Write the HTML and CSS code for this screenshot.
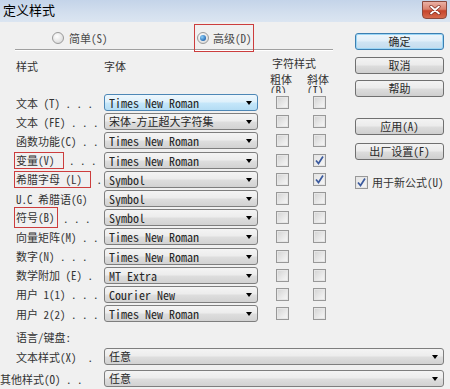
FILE: index.html
```html
<!DOCTYPE html>
<html lang="zh-CN">
<head>
<meta charset="utf-8">
<title>定义样式</title>
<link rel="stylesheet" href="styles.css">
</head>
<body>
<div class="win">
  <div class="titlebar">
    <span class="title">定义样式</span>
    <span class="close"><svg width="12" height="10" viewBox="0 0 12 10"><path d="M2 1.5 L10 8.5 M10 1.5 L2 8.5" stroke="#7a2a1e" stroke-width="3.2" stroke-linecap="round"/><path d="M2 1.5 L10 8.5 M10 1.5 L2 8.5" stroke="#ffffff" stroke-width="1.8" stroke-linecap="round"/></svg></span>
  </div>
  <div class="top">
    <div class="main">
      <div class="mode">
        <span class="opt opt-simple"><span class="radio"></span><span>简单(S)</span></span>
        <span class="opt opt-adv"><span class="radio on"></span><span>高级(D)</span></span>
      </div>
      <div class="sep"></div>
      <div class="head">
        <span class="h-style">样式</span>
        <span class="h-font">字体</span>
        <div class="h-char">
          <span class="h-char-title">字符样式</span>
          <div class="h-sub"><span class="sub sub-b">粗体(B)</span><span class="sub">斜体(I)</span></div>
        </div>
      </div>
      <div class="rows">
        <div class="row"><span class="lbl">文本 (T) . . .</span><div class="combo active"><span class="val">Times New Roman</span><i class="arr"></i></div><span class="cb"></span><span class="cb cb2"></span></div>
        <div class="row"><span class="lbl">文本 (FE) . . .</span><div class="combo"><span class="val cjk">宋体-方正超大字符集</span><i class="arr"></i></div><span class="cb"></span><span class="cb cb2"></span></div>
        <div class="row"><span class="lbl">函数功能(C) . .</span><div class="combo"><span class="val">Times New Roman</span><i class="arr"></i></div><span class="cb"></span><span class="cb cb2"></span></div>
        <div class="row"><span class="lbl"><span class="mk mk-v">变量(V)</span> . . .</span><div class="combo"><span class="val">Times New Roman</span><i class="arr"></i></div><span class="cb"></span><span class="cb cb2 on"><svg width="11" height="11" viewBox="0 0 11 11"><path d="M2 5.5 L4.5 8.5 L9 1.5" fill="none" stroke="#3b5a9e" stroke-width="1.7"/></svg></span></div>
        <div class="row"><span class="lbl"><span class="mk mk-l">希腊字母 (L)</span> .</span><div class="combo"><span class="val">Symbol</span><i class="arr"></i></div><span class="cb"></span><span class="cb cb2 on"><svg width="11" height="11" viewBox="0 0 11 11"><path d="M2 5.5 L4.5 8.5 L9 1.5" fill="none" stroke="#3b5a9e" stroke-width="1.7"/></svg></span></div>
        <div class="row"><span class="lbl">U.C 希腊语(G)</span><div class="combo"><span class="val">Symbol</span><i class="arr"></i></div><span class="cb"></span><span class="cb cb2"></span></div>
        <div class="row"><span class="lbl"><span class="mk mk-b">符号(B)</span> . . .</span><div class="combo"><span class="val">Symbol</span><i class="arr"></i></div><span class="cb"></span><span class="cb cb2"></span></div>
        <div class="row"><span class="lbl">向量矩阵(M) . .</span><div class="combo"><span class="val">Times New Roman</span><i class="arr"></i></div><span class="cb"></span><span class="cb cb2"></span></div>
        <div class="row"><span class="lbl">数字(N) . . .</span><div class="combo"><span class="val">Times New Roman</span><i class="arr"></i></div><span class="cb"></span><span class="cb cb2"></span></div>
        <div class="row"><span class="lbl">数学附加 (E) .</span><div class="combo"><span class="val">MT Extra</span><i class="arr"></i></div><span class="cb"></span><span class="cb cb2"></span></div>
        <div class="row"><span class="lbl">用户 1(1) . . .</span><div class="combo"><span class="val">Courier New</span><i class="arr"></i></div><span class="cb"></span><span class="cb cb2"></span></div>
        <div class="row"><span class="lbl">用户 2(2) . . .</span><div class="combo"><span class="val">Times New Roman</span><i class="arr"></i></div><span class="cb"></span><span class="cb cb2"></span></div>
      </div>
    </div>
    <div class="side">
      <div class="btn btn-default">确定</div>
      <div class="btn btn-cancel">取消</div>
      <div class="btn btn-help">帮助</div>
      <div class="btn btn-apply">应用(A)</div>
      <div class="btn btn-reset">出厂设置(F)</div>
      <div class="chk-row"><span class="cb on"><svg width="11" height="11" viewBox="0 0 11 11"><path d="M2 5.5 L4.5 8.5 L9 1.5" fill="none" stroke="#3b5a9e" stroke-width="1.7"/></svg></span><span class="chk-text">用于新公式(U)</span></div>
    </div>
  </div>
  <div class="bottom">
    <div class="lang">语言/键盘:</div>
    <div class="brow"><span class="lbl">文本样式(X)  .</span><div class="combo wide"><span class="val cjk">任意</span><i class="arr"></i></div></div>
    <div class="brow shift"><span class="lbl">其他样式(O) . .</span><div class="combo wide"><span class="val cjk">任意</span><i class="arr"></i></div></div>
  </div>
</div>
</body>
</html>
```

FILE: styles.css
```css
html, body {
  margin: 0;
  padding: 0;
}

body {
  width: 450px;
  height: 389px;
  overflow: hidden;
  background: #f0f0f0;
  font-family: "Noto Sans Mono CJK SC", "Noto Sans CJK SC", "Liberation Mono", monospace;
  font-size: 11px;
  color: #333;
}

.win {
  width: 450px;
  height: 389px;
  background: #f0f0f0;
  overflow: hidden;
}

.titlebar {
  height: 22px;
  box-sizing: border-box;
  display: flex;
  align-items: flex-start;
  justify-content: space-between;
  padding: 0 3px 0 3px;
  background: linear-gradient(#c4d4e9, #d3dfee 60%, #dbe5f1);
}

.title {
  font-family: "Noto Sans CJK SC", sans-serif;
  font-size: 13px;
  line-height: 20px;
  color: #000;
}

.close {
  width: 25px;
  height: 18px;
  margin-top: 1px;
  box-sizing: border-box;
  border: 1px solid #8a4a3e;
  border-radius: 0 0 4px 4px;
  background: linear-gradient(#eab1a4, #d9826e 45%, #c6442b 55%, #d66a4d);
  display: flex;
  align-items: center;
  justify-content: center;
}

.top {
  display: flex;
}

.main {
  width: 355px;
  flex-shrink: 0;
}

.mode {
  height: 27px;
  box-sizing: border-box;
  padding: 2px 0 0 52px;
  display: flex;
  align-items: flex-start;
  color: #4a4a4a;
}

.opt {
  display: inline-flex;
  align-items: center;
  height: 28px;
  gap: 5px;
  box-sizing: border-box;
}

.opt-simple {
  width: 142px;
}

.opt-adv {
  border: 1px solid #cc3d3d;
  padding: 0 1px 0 2px;
  gap: 4px;
}

.radio {
  width: 12px;
  height: 12px;
  box-sizing: border-box;
  border-radius: 50%;
  border: 1px solid #9a9a9a;
  background: radial-gradient(circle at 40% 35%, #ffffff, #e4e4e4 60%, #cfcfcf);
  display: inline-flex;
  align-items: center;
  justify-content: center;
}

.radio.on::after {
  content: "";
  width: 6px;
  height: 6px;
  border-radius: 50%;
  background: radial-gradient(circle at 35% 35%, #8fd0f8, #2a6fb8 70%, #1b4f8e);
}

.sep {
  margin-left: 15px;
  width: 318px;
  height: 0;
  border-top: 1px solid #a0a0a0;
  border-bottom: 1px solid #ffffff;
}

.head {
  height: 42px;
  box-sizing: border-box;
  display: flex;
  padding-left: 16px;
  line-height: 16px;
}

.h-style {
  width: 88px;
  padding-top: 7px;
}

.h-font {
  width: 166px;
  padding-top: 7px;
}

.h-char {
  display: flex;
  flex-direction: column;
  padding-top: 4px;
  padding-left: 2px;
}

.h-sub {
  display: flex;
  margin-top: 3px;
  margin-left: -2px;
}

.sub {
  width: 24px;
  height: 19px;
  line-height: 11px;
  overflow: hidden;
}

.sub-b {
  margin-right: 13px;
}

.rows {
  display: flex;
  flex-direction: column;
}

.row {
  height: 19.2px;
  display: flex;
  align-items: center;
  padding-left: 16px;
}

.lbl {
  width: 88px;
  flex-shrink: 0;
  white-space: pre;
  overflow: hidden;
  line-height: 16px;
}

.row .lbl {
  overflow: visible;
  height: 16px;
  display: flex;
  align-items: center;
}

.mk {
  display: inline-block;
  border: 1px solid #cc3d3d;
  margin-left: -2px;
  padding: 0 8px 0 1px;
  line-height: 15px;
}

.mk-b {
  padding-right: 2px;
  line-height: 19px;
}

.combo {
  width: 154px;
  height: 17px;
  flex-shrink: 0;
  box-sizing: border-box;
  border: 1px solid #7e7e7e;
  border-radius: 3px;
  background: linear-gradient(#f4f4f4, #ececec 48%, #dedede 52%, #d2d2d2);
  display: flex;
  align-items: center;
  padding-left: 4px;
  padding-right: 5px;
  color: #262626;
}

.combo.active {
  border-color: #4d87b6;
  background: linear-gradient(#eef7fd, #ddf0fb 48%, #c6e7fa 52%, #b4dcf4);
}

.combo.wide {
  width: 340px;
}

.val {
  white-space: pre;
  flex: 1;
  overflow: hidden;
  font-size: 12px;
  line-height: 15px;
}

.val.cjk {
  font-size: 11px;
}

.arr {
  width: 0;
  height: 0;
  border-top: 4px solid #000;
  border-left: 3.5px solid transparent;
  border-right: 3.5px solid transparent;
  margin-top: 1px;
}

.cb {
  width: 13px;
  height: 13px;
  flex-shrink: 0;
  box-sizing: border-box;
  border: 1px solid #989898;
  background: linear-gradient(135deg, #d2d2d2, #eeeeee 70%, #f6f6f6);
  box-shadow: inset 0 0 0 1px #e6e6e6;
  margin-left: 18px;
  display: inline-flex;
  align-items: center;
  justify-content: center;
}

.cb2 {
  margin-left: 24px;
}

.cb.on {
  background: linear-gradient(135deg, #e4e4e4, #f6f6f6);
}

.side {
  width: 89px;
  padding-top: 11px;
  display: flex;
  flex-direction: column;
}

.btn {
  height: 17px;
  box-sizing: border-box;
  border: 1px solid #707070;
  border-radius: 3px;
  background: linear-gradient(#f3f3f3, #ebebeb 48%, #dddddd 52%, #cfcfcf);
  display: flex;
  align-items: center;
  justify-content: center;
  line-height: 15px;
  color: #2a2a2a;
}

.btn-default {
  border-color: #3c7fb1;
  box-shadow: inset 0 0 0 1px #9bd6f6;
  background: linear-gradient(#eef6fb, #e0eef8 48%, #cfe4f3 52%, #c4dcee);
}

.btn-cancel {
  margin-top: 7px;
}

.btn-help {
  margin-top: 6px;
}

.btn-apply {
  margin-top: 21px;
}

.btn-reset {
  margin-top: 8px;
}

.chk-row {
  margin-top: 15px;
  display: flex;
  align-items: center;
  gap: 4px;
  line-height: 14px;
  white-space: nowrap;
}

.chk-row .cb {
  margin-left: 0;
}

.bottom {
  margin-top: 5.6px;
}

.lang {
  padding-left: 16px;
  line-height: 16px;
}

.brow {
  height: 22px;
  display: flex;
  align-items: center;
  padding-left: 16px;
}

.lang + .brow {
  margin-top: 1px;
}

.brow.shift .lbl {
  margin-left: -16px;
  width: 104px;
}
```
